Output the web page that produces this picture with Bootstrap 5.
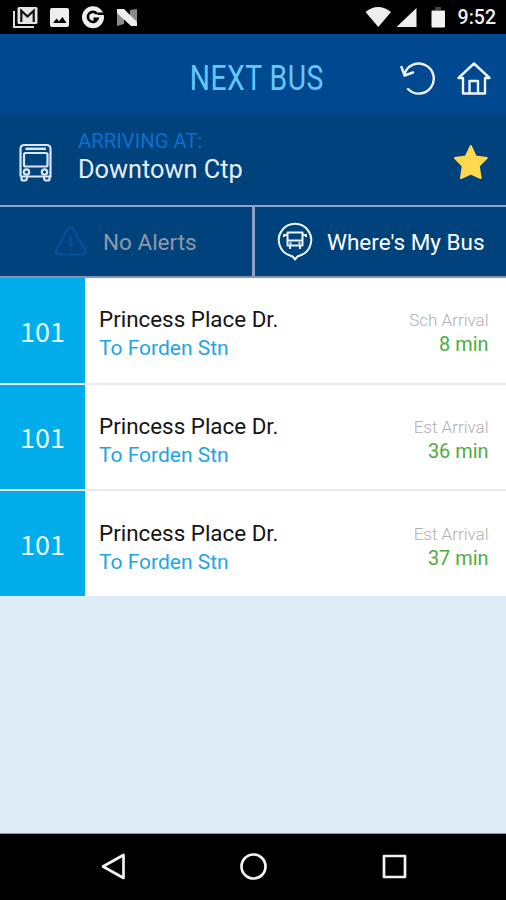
<!DOCTYPE html>
<html lang="en">
<head>
<meta charset="utf-8">
<meta name="viewport" content="width=device-width, initial-scale=1">
<title>Next Bus</title>
<link href="https://cdn.jsdelivr.net/npm/bootstrap@5.3.0/dist/css/bootstrap.min.css" rel="stylesheet">
<style>
body{font-family:Roboto,"Liberation Sans",sans-serif;background:#deecf6;height:900px;overflow:hidden;line-height:1}
svg{display:block;flex:none}
.status-bar{height:34px;background:#000;color:#eee}
.clock{font-size:19.5px;font-weight:500;line-height:34px;padding:2px 10px 0 0}
.app-head{height:79px;background:#00488f}
.app-title{font-size:34.5px;line-height:40px;color:#66c5fb;transform:scaleX(.82);letter-spacing:.6px;white-space:nowrap;font-weight:400;padding-top:1px}
.head-side{width:106px}
.stop-bar{height:92px;background:#00437c}
.stop-label{font-size:20.3px;line-height:25px;color:#0b6fd0}
.stop-name{font-size:25.3px;line-height:31px;color:#e9eefa}
.tabs-row{height:73px;background:#00437c;border-top:2px solid #8fa5cc;border-bottom:2px solid #8093b8}
.tab-l{width:255px;border-right:3px solid #8fa0c6;color:#8e98a8}
.tab-txt{font-size:22.5px;line-height:30px;white-space:nowrap;padding-top:1px}
.arrival{height:106.5px;background:#fff;border-bottom:2px solid #e9ebee}
.arrival:last-child{border-bottom:0;height:105px}
.route-no{width:85px;background:#00adea;color:#eafaff;font-family:"Noto Sans CJK SC",sans-serif;font-size:27px}
.info{padding:7px 0 0 14px}
.eta{padding:6px 17.5px 0 0}
.street{font-size:22.4px;line-height:30px;color:#151515}
.dest{font-size:21px;line-height:29px;color:#1ea5e3}
.kind{font-size:17px;line-height:24px;color:#b0b0b0;font-weight:300}
.mins{font-size:19.9px;line-height:26px;color:#4cac40}
.nav-keys{height:67px;background:#000;border-top:1px solid #8f999f}
</style>
<script src="https://cdn.jsdelivr.net/npm/bootstrap@5.3.0/dist/js/bootstrap.bundle.min.js"></script>
</head>
<body class="d-flex flex-column m-0">
<header>
  <div class="status-bar d-flex align-items-center justify-content-between">
    <svg width="150" height="34">
      <path d="M14 11v16h20" fill="none" stroke="#ddd" stroke-width="2"/>
      <rect x="17.5" y="7" width="20" height="17" rx="1.5" fill="#e4e4e4"/>
      <path d="M21.300 22V10.800L27.500 16.500 33.700 10.800V22" fill="none" stroke="#111" stroke-width="2.200"/>
      <rect x="50" y="8" width="19" height="19" rx="2" fill="#eee"/>
      <path d="M53 23l3.500-4.500 2.500 2.700 3.500-4.200 4 6z" fill="#000"/>
      <circle cx="93" cy="17.300" r="11" fill="#eee"/>
      <path d="M97 14A5 5 0 1 0 97.500 18.800H93.500" fill="none" stroke="#000" stroke-width="2.600"/>
      <path d="M97.500 12.500h7v2.500h-7z" fill="#000"/>
      <path d="M117 11l7 8v5l-7 2zM130 10l7-1v16l-7-5z" fill="#8b8b8b"/>
      <path d="M117 9h7l13 13v4h-6L117 13z" fill="#eee"/>
    </svg>
    <div class="d-flex align-items-center">
      <svg width="96" height="34">
        <path d="M3.500 12Q16 2 29 12L16.300 27z" fill="#eee"/>
        <path d="M54.500 8v19H34.500z" fill="#eee"/>
        <path d="M73 7h6v3h-6z" fill="#444"/>
        <rect x="69.500" y="10.500" width="13.500" height="17" rx="1" fill="#f2f2f2"/>
      </svg>
      <span class="clock">9:52</span>
    </div>
  </div>
  <div class="app-head d-flex align-items-center">
    <div class="head-side"></div>
    <div class="flex-grow-1 d-flex justify-content-center pt-2 ps-2"><h1 class="app-title m-0">NEXT BUS</h1></div>
    <div class="head-side">
      <svg width="106" height="79" fill="none" stroke="#eef3ff" stroke-width="2.400" stroke-linecap="round" stroke-linejoin="round">
        <path d="M4.500 40A15 15 0 1 1 8 55M1.500 33L4.500 41.500 13 38.500"/>
        <path d="M58.500 44L74 29.500 89.500 44H85V59.500H63V44zM69.500 59V47H78V59"/>
      </svg>
    </div>
  </div>
</header>
<section class="stop-bar d-flex">
  <svg width="78" height="92" fill="none" stroke="#dbe5f5" stroke-width="2.200">
    <path d="M20.500 63.500V36Q20.500 32 24.500 32H46.500Q50.500 32 50.500 36V63.500H20.500"/>
    <path d="M21.500 64v2Q21.500 67.500 23 67.500H25Q27 67.500 27 64M44 64Q44 67.500 46 67.500H48Q49.500 67.500 49.500 66V64"/>
    <path d="M25.500 35.800H46" stroke-width="2.500"/>
    <rect x="24" y="40" width="23.500" height="13.500" rx="1.500"/>
    <circle cx="26.500" cy="59" r="2.700" fill="#00437c"/><circle cx="44.500" cy="59" r="2.700" fill="#00437c"/>
  </svg>
  <div class="flex-grow-1 pt-3">
    <div class="stop-label">ARRIVING AT:</div>
    <div class="stop-name">Downtown Ctp</div>
  </div>
  <svg width="56" height="92"><path d="M20.800 33L25.700 43.500 36.700 45 28.700 53 30.700 65 20.800 60.500 11 65 12.800 53 5 45 15.800 43.500z" fill="#ffd84f" stroke="#ffd84f" stroke-width="2" stroke-linejoin="round"/></svg>
</section>
<nav class="tabs-row d-flex">
  <div class="tab-l d-flex align-items-center">
    <svg width="103" height="69" fill="none" stroke="#07509f" stroke-width="2.200" stroke-linecap="round" stroke-linejoin="round"><path d="M68 22Q70.500 19 73 22L85 43Q86 47 82 47.500H59Q55 47 56 43zM70.500 29v10M70.500 42.500v.5"/></svg>
    <span class="tab-txt">No Alerts</span>
  </div>
  <div class="d-flex align-items-center text-white">
    <svg width="72" height="69" fill="none" stroke="#eef3ff" stroke-width="2" stroke-linejoin="round">
      <path d="M34.500 48.300A16.200 16.200 0 1 1 45.500 48.300Q42 49 40 52.500Q38 49 34.500 48.300z"/>
      <path d="M32.500 25.500H47.500V38.500H32.500zM32.500 33.500H47.500M29 30V28H32M51 30V28H48M35 39v3M45 39v3M34.500 36.200h2M43.500 36.200h2"/>
    </svg>
    <span class="tab-txt">Where's My Bus</span>
  </div>
</nav>
<main class="flex-grow-1">
  <div class="arrival d-flex">
    <div class="route-no d-flex align-items-center justify-content-center">101</div>
    <div class="info flex-grow-1 d-flex flex-column justify-content-center"><div class="street">Princess Place Dr.</div><div class="dest">To Forden Stn</div></div>
    <div class="eta d-flex flex-column justify-content-center text-end"><div class="kind">Sch Arrival</div><div class="mins">8 min</div></div>
  </div>
  <div class="arrival d-flex">
    <div class="route-no d-flex align-items-center justify-content-center">101</div>
    <div class="info flex-grow-1 d-flex flex-column justify-content-center"><div class="street">Princess Place Dr.</div><div class="dest">To Forden Stn</div></div>
    <div class="eta d-flex flex-column justify-content-center text-end"><div class="kind">Est Arrival</div><div class="mins">36 min</div></div>
  </div>
  <div class="arrival d-flex">
    <div class="route-no d-flex align-items-center justify-content-center">101</div>
    <div class="info flex-grow-1 d-flex flex-column justify-content-center"><div class="street">Princess Place Dr.</div><div class="dest">To Forden Stn</div></div>
    <div class="eta d-flex flex-column justify-content-center text-end"><div class="kind">Est Arrival</div><div class="mins">37 min</div></div>
  </div>
</main>
<footer class="nav-keys">
  <svg width="506" height="66" fill="none" stroke="#f2f2f2" stroke-width="2.700" stroke-linejoin="round">
    <path d="M123.500 21V44L103 32.500z"/><circle cx="253.500" cy="32.500" r="12"/><rect x="384" y="22" width="21" height="21"/>
  </svg>
</footer>
</body>
</html>
